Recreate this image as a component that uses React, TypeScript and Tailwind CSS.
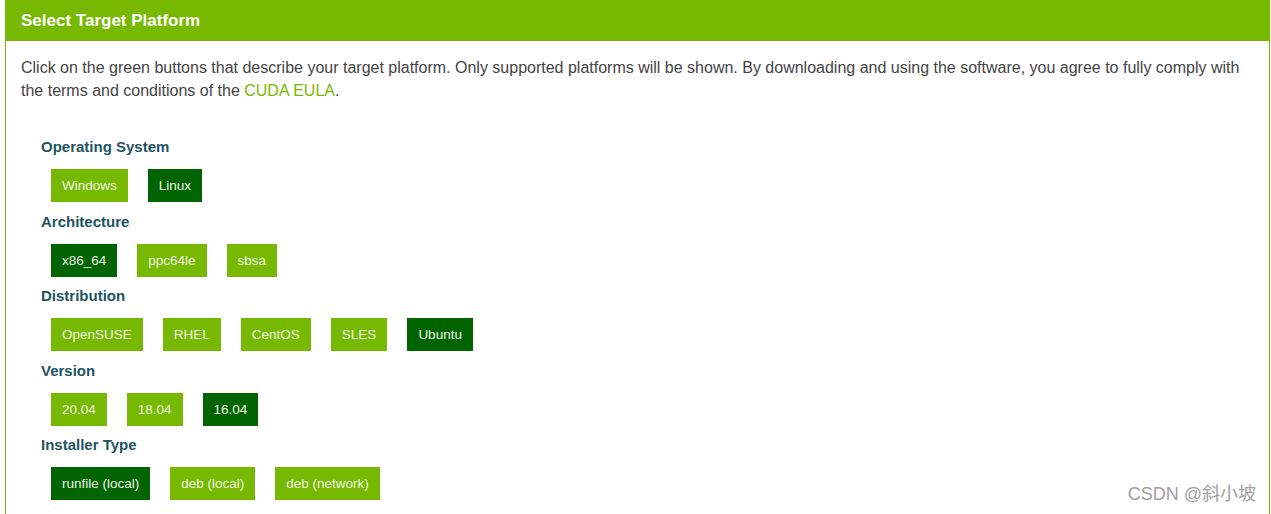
import { useState } from "react";

/* ---------------- DATA ---------------- */

type Group = {
  label: string;
  options: string[];
  selected: string;
};

const groups: Group[] = [
  { label: "Operating System", options: ["Windows", "Linux"], selected: "Linux" },
  { label: "Architecture", options: ["x86_64", "ppc64le", "sbsa"], selected: "x86_64" },
  {
    label: "Distribution",
    options: ["OpenSUSE", "RHEL", "CentOS", "SLES", "Ubuntu"],
    selected: "Ubuntu",
  },
  { label: "Version", options: ["20.04", "18.04", "16.04"], selected: "16.04" },
  {
    label: "Installer Type",
    options: ["runfile (local)", "deb (local)", "deb (network)"],
    selected: "runfile (local)",
  },
];

/* ---------------- COMPONENTS ---------------- */

function OptionRow({ group }: { group: Group }) {
  const [selected, setSelected] = useState(group.selected);

  return (
    <div className="flex flex-col">
      <div className="h-[22px] text-[15px] font-bold leading-[22px] text-[#1d5460]">
        {group.label}
      </div>
      <div className="mt-[11px] flex gap-5 pl-[10px]">
        {group.options.map((o) => (
          <button
            key={o}
            onClick={() => setSelected(o)}
            className={
              "h-[33px] px-[11px] pt-[2px] text-[13.5px] text-[#eef6e6] " +
              (o === selected ? "bg-[#006400]" : "bg-[#76b900]")
            }
          >
            {o}
          </button>
        ))}
      </div>
    </div>
  );
}

export default function App() {
  return (
    <div className="relative h-[514px] w-[1271px] overflow-hidden bg-white font-['Liberation_Sans',sans-serif]">
      <div className="ml-[5px] mr-px flex h-[600px] flex-col border-x border-[#76b900]">
        {/* HEADER */}
        <div className="-ml-px -mr-px flex h-[41px] items-center bg-[#76b900] px-4 text-[17px] font-bold text-white">
          Select Target Platform
        </div>

        {/* BODY */}
        <div className="pl-[15px] pr-[20px] pt-[15px]">
          <p className="text-[16px] leading-[23px] text-[#444]">
            Click on the green buttons that describe your target platform. Only supported
            platforms will be shown. By downloading and using the software, you agree to
            fully comply with the terms and conditions of the{" "}
            <span className="text-[#76b900]">CUDA EULA</span>.
          </p>

          <div className="mt-[34px] flex flex-col gap-[8.5px] pl-[20px]">
            {groups.map((g) => (
              <OptionRow key={g.label} group={g} />
            ))}
          </div>
        </div>
      </div>

      {/* WATERMARK */}
      <div className="absolute bottom-[6px] right-[15px] text-[18px] text-[#a0a0a0] font-['Liberation_Sans','Noto_Sans_CJK_SC',sans-serif]">
        CSDN @斜小坡
      </div>
    </div>
  );
}
